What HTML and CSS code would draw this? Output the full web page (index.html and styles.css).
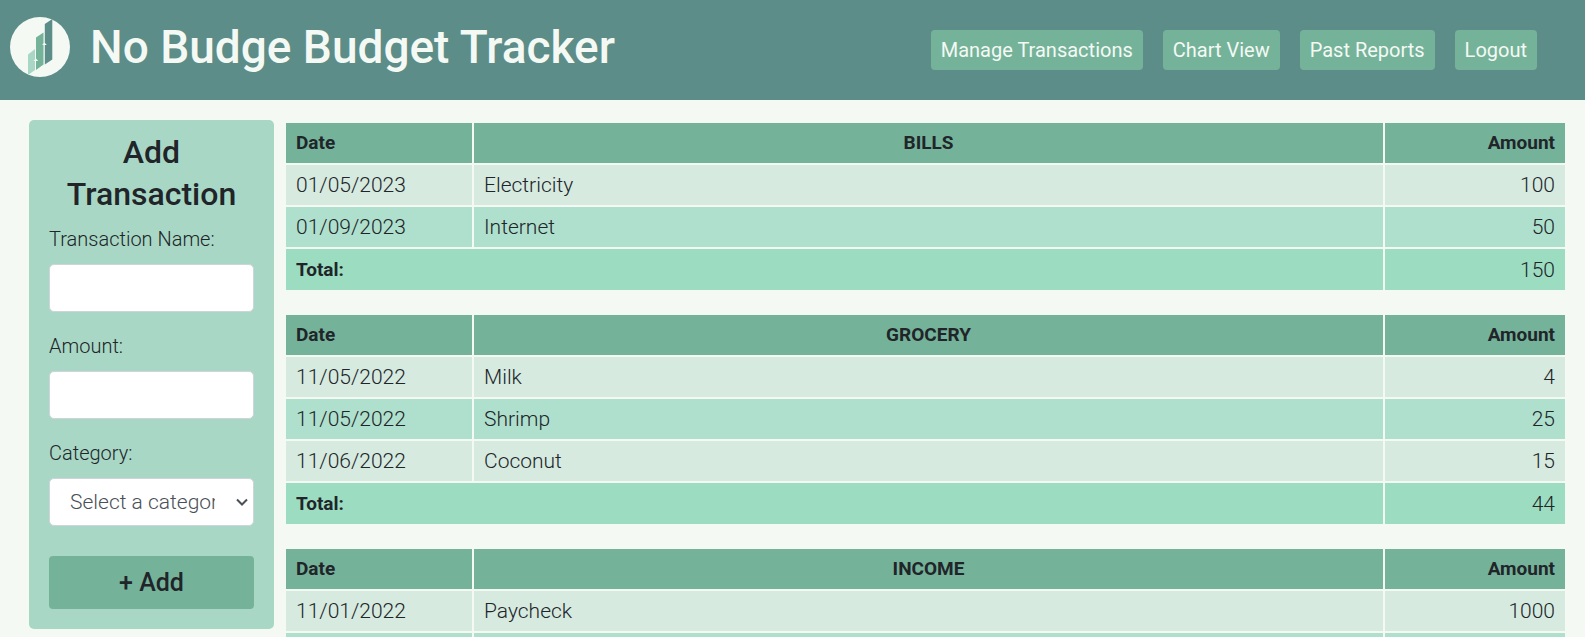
FILE: index.html
```html
<!DOCTYPE html>
<html lang="en">
<head>
<meta charset="utf-8">
<meta name="viewport" content="width=device-width, initial-scale=1">
<title>No Budge Budget Tracker</title>
<link rel="stylesheet" href="styles.css">
</head>
<body>
<header class="site-header">
  <svg class="logo" viewBox="0 0 60 60" aria-hidden="true">
    <circle cx="30" cy="30" r="30" fill="#f4f9f4"/>
    <path d="M18 37.500L25 32V53L18 58Z" fill="#a8d8c5"/>
    <path d="M26 20.500L33.500 15.500V47.500L26 53Z" fill="#74b39a"/>
    <path d="M34.800 7L42.300 2V42.500L34.800 47.500Z" fill="#5d8d88"/>
    <path d="M23.500 44L26 41.500L28.200 44ZM32 28L34.500 25.500L36.800 28Z" fill="#f4f9f4"/>
  </svg>
  <h1 class="site-title">No Budge Budget Tracker</h1>
  <nav class="site-nav">
    <a class="nav-link" href="#manage">Manage Transactions</a>
    <a class="nav-link" href="#chart">Chart View</a>
    <a class="nav-link" href="#reports">Past Reports</a>
    <a class="nav-link" href="#logout">Logout</a>
  </nav>
</header>
<main class="content">
  <form class="add-form">
    <h2 class="form-title">Add Transaction</h2>
    <label class="form-label" for="name">Transaction Name:</label>
    <input class="form-control" id="name" type="text">
    <label class="form-label" for="amount">Amount:</label>
    <input class="form-control" id="amount" type="text">
    <label class="form-label" for="category">Category:</label>
    <div class="select-wrap">
      <select class="form-control form-select" id="category">
        <option>Select a category</option>
        <option>Bills</option>
        <option>Grocery</option>
        <option>Income</option>
      </select>
      <svg class="chevron" viewBox="0 0 12 8" aria-hidden="true"><path d="M1 1.500L6 6.500L11 1.500" fill="none" stroke="#495057" stroke-width="2"/></svg>
    </div>
    <button class="add-button" type="button">+ Add</button>
  </form>
  <div class="tables">
    <table class="ledger">
      <thead><tr><th class="date">Date</th><th class="name">BILLS</th><th class="amount">Amount</th></tr></thead>
      <tbody>
        <tr><td>01/05/2023</td><td>Electricity</td><td class="amount">100</td></tr>
        <tr><td>01/09/2023</td><td>Internet</td><td class="amount">50</td></tr>
      </tbody>
      <tfoot><tr><th class="total" colspan="2">Total:</th><td class="amount">150</td></tr></tfoot>
    </table>
    <table class="ledger">
      <thead><tr><th class="date">Date</th><th class="name">GROCERY</th><th class="amount">Amount</th></tr></thead>
      <tbody>
        <tr><td>11/05/2022</td><td>Milk</td><td class="amount">4</td></tr>
        <tr><td>11/05/2022</td><td>Shrimp</td><td class="amount">25</td></tr>
        <tr><td>11/06/2022</td><td>Coconut</td><td class="amount">15</td></tr>
      </tbody>
      <tfoot><tr><th class="total" colspan="2">Total:</th><td class="amount">44</td></tr></tfoot>
    </table>
    <table class="ledger">
      <thead><tr><th class="date">Date</th><th class="name">INCOME</th><th class="amount">Amount</th></tr></thead>
      <tbody>
        <tr><td>11/01/2022</td><td>Paycheck</td><td class="amount">1000</td></tr>
        <tr><td></td><td></td><td class="amount"></td></tr>
      </tbody>
    </table>
  </div>
</main>
</body>
</html>
```
FILE: styles.css
```css
* { box-sizing: border-box; }

body {
  margin: 0;
  height: 100vh;
  overflow: hidden;
  background: #f4f9f4;
  color: #212529;
  font: 300 20px/30px Roboto, "Liberation Sans", sans-serif;
}

.site-header {
  display: flex;
  align-items: center;
  min-height: 100px;
  padding: 0 48px 0 10px;
  background: #5d8d88;
}

.logo { flex: none; width: 60px; height: 60px; margin: 0 20px 6px 0; }

.site-title {
  margin: 0 auto 6px 0;
  color: #f4f9f4;
  font-size: 46px;
  line-height: 60px;
  font-weight: 500;
  white-space: nowrap;
}

.site-nav { display: flex; gap: 20px; }

.nav-link {
  padding: 5px 10px;
  border-radius: 4px;
  background: #74b39a;
  color: #f4f9f4;
  font-weight: 400;
  text-decoration: none;
  white-space: nowrap;
}

.content {
  display: flex;
  align-items: flex-start;
  gap: 12px;
  padding: 20px 20px 0 29px;
}

.add-form {
  flex: none;
  width: 245px;
  padding: 11px 20px 20px;
  border-radius: 5px;
  background: #a8d8c5;
}

.form-title {
  margin: 0 0 9px;
  font-size: 32px;
  line-height: 42px;
  font-weight: 500;
  text-align: center;
}

.form-label { display: block; margin-bottom: 10px; }

.form-control {
  display: block;
  width: 100%;
  height: 48px;
  margin-bottom: 19px;
  padding: 0 20px;
  border: 1px solid #ced4da;
  border-radius: 5px;
  background: #fff;
  color: #495057;
  font: inherit;
}

.select-wrap { position: relative; margin-bottom: 30px; }

.form-select { margin: 0; padding-right: 38px; font-size: 21px; appearance: none; }

.chevron {
  position: absolute;
  top: 20px;
  right: 6px;
  width: 12px;
  height: 8px;
  pointer-events: none;
}

.add-button {
  display: block;
  width: 100%;
  height: 53px;
  border: 0;
  border-radius: 4px;
  background: #74b39a;
  color: inherit;
  font: 500 25px/30px Roboto, "Liberation Sans", sans-serif;
}

.tables {
  display: flex;
  flex: 1;
  flex-direction: column;
  gap: 21px;
  min-width: 0;
  padding-top: 1px;
}

/* The outer border-spacing is pulled back so the cells fill the column. */
.ledger {
  width: calc(100% + 4px);
  margin: 0 -2px;
  border-collapse: separate;
  border-spacing: 2px;
  table-layout: fixed;
}

.ledger th,
.ledger td { height: 40px; padding: 5px 10px; text-align: left; }

.ledger th { font-size: 19px; font-weight: 700; }
.ledger td { font-size: 21px; }
.ledger thead th { background: #74b39a; }
.ledger .date { width: 186px; }
.ledger .name { text-align: center; }
.ledger .amount { width: 180px; text-align: right; }
.ledger tbody td { background: #d6eae0; }
.ledger tbody tr:nth-child(even) td { background: #afe0cd; }
.ledger tfoot th,
.ledger tfoot td { height: 41px; background: #9cddc2; }
```
